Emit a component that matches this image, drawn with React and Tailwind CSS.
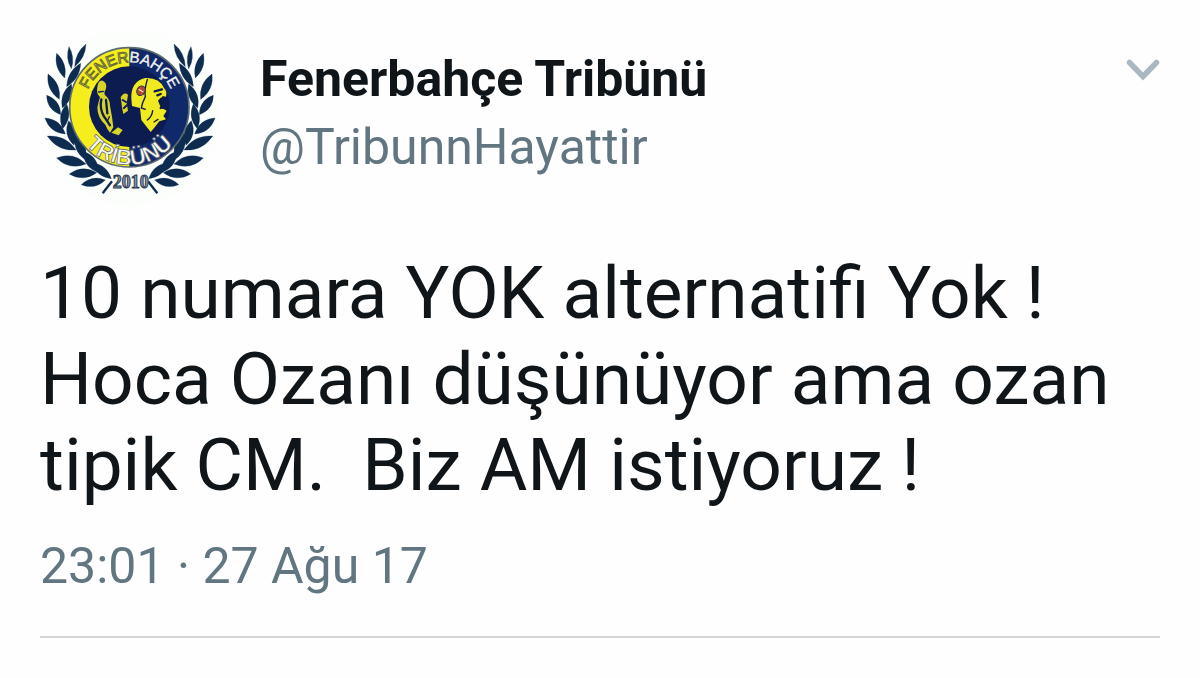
// base x, base y, tip x, tip y, width
const LEAVES = [
  [124, 146, 117, 80, 15],
  [134, 140, 168, 72, 17],
  [104, 174, 80, 100, 22],
  [110, 200, 152, 130, 22],
  [88, 238, 54, 162, 25],
  [97, 264, 124, 192, 24],
  [92, 284, 50, 226, 25],
  [98, 326, 110, 252, 24],
  [106, 342, 45, 294, 26],
  [132, 376, 116, 302, 26],
  [138, 390, 52, 348, 28],
  [164, 418, 138, 338, 29],
  [168, 432, 80, 414, 30],
  [206, 458, 160, 394, 28],
  [200, 458, 118, 462, 27],
  [244, 476, 186, 428, 24],
  [226, 480, 154, 494, 24],
]

function leafPath([x1, y1, x2, y2, w]) {
  const dx = x2 - x1
  const dy = y2 - y1
  const len = Math.hypot(dx, dy)
  const nx = (-dy / len) * w
  const ny = (dx / len) * w
  const mx = (x1 + x2) / 2
  const my = (y1 + y2) / 2
  return `M${x1} ${y1}Q${mx + nx} ${my + ny} ${x2} ${y2}Q${mx - nx} ${my - ny} ${x1} ${y1}Z`
}

function Branch() {
  return (
    <g fill="#0d2c50" stroke="#0d2c50" strokeWidth="1" strokeLinejoin="round">
      {LEAVES.map((leaf) => (
        <path key={leaf.join('-')} d={leafPath(leaf)} />
      ))}
      <path d="M218 520L246 484" fill="none" strokeWidth="7" />
    </g>
  )
}

function Emblem() {
  return (
    <svg viewBox="30 30 540 540" className="size-[180px] shrink-0" role="img" aria-label="Fenerbahçe Tribünü">
      <circle cx="300" cy="290" r="268" fill="#fcfefc" />
      <Branch />
      <g transform="translate(600 0) scale(-1 1)">
        <Branch />
      </g>

      {/* disc */}
      <circle cx="298" cy="262" r="179" fill="#f5ed1c" />
      <path d="M298 83A179 179 0 0 1 298 441Z" fill="#10296a" />
      <circle cx="298" cy="262" r="179" fill="none" stroke="#5b6b6e" strokeWidth="5" />
      <circle cx="298" cy="260" r="121" fill="#0c1b50" />

      {/* faces */}
      <g fill="#d8d327">
        <path d="M202 202Q204 180 218 182Q232 188 228 206Q222 214 224 224Q240 236 240 258L246 290L250 322L240 338Q232 330 226 314Q202 294 202 262Q206 244 210 232Q198 220 202 202Z" />
        <path d="M272 232Q282 214 294 224L290 250L294 272L280 282L276 262Z" />
        <path d="M244 338L264 322L278 330L266 346Z" />
      </g>
      <path
        d="M304 236Q302 184 346 174Q388 172 402 204Q412 214 408 230L398 228L388 246L396 264L410 272L400 288L408 298L388 304L374 322L362 336L334 300L330 264L306 258Z"
        fill="#f2ea20"
      />
      <g fill="none" stroke="#0c1b50" strokeLinecap="round">
        <path d="M214 238Q208 266 222 290M228 240L232 280M224 292L240 316" strokeWidth="7" />
        <path d="M206 216L220 214M238 290L232 304" strokeWidth="4" />
        <path d="M278 240L288 246M282 264L290 256" strokeWidth="6" />
        <path d="M352 178Q342 212 346 230Q336 250 334 264L346 268" strokeWidth="4" />
        <path d="M374 214L396 208M382 226L392 222M390 244L402 236M392 264L404 252" strokeWidth="7" />
        <path d="M352 300Q366 290 368 272M372 306L384 298" strokeWidth="4" />
      </g>
      <path d="M384 242Q396 224 408 236L410 268L394 266Z" fill="#0c1b50" />
      <ellipse cx="333" cy="212" rx="12" ry="15" fill="#b4492f" stroke="#27304f" strokeWidth="3" transform="rotate(30 333 212)" />
      <path d="M326 208L340 216" stroke="#e9e2c8" strokeWidth="4" />

      {/* lettering */}
      <path id="emblem-top" d="M163 262A135 135 0 0 1 433 262" fill="none" />
      <path id="emblem-bottom" d="M125 262A173 173 0 0 0 471 262" fill="none" />
      <g fontFamily="Liberation Sans, Arial, sans-serif" textAnchor="middle">
        <text fontSize="46" fill="#f4f4ee" stroke="#f4f4ee" strokeWidth="1">
          <textPath href="#emblem-top" startOffset="50%">
            <tspan fill="#e2e0a0" stroke="#6a6d2c" strokeWidth="3">FENER</tspan>BAHÇE
          </textPath>
        </text>
        <text fontSize="66" fontWeight="700" fill="#fbfbf5" stroke="#56606a" strokeWidth="2">
          <textPath href="#emblem-bottom" startOffset="50%">TRİBÜNÜ</textPath>
        </text>
      </g>
      <text
        x="302"
        y="505"
        fontSize="54"
        fontWeight="700"
        fontFamily="Liberation Serif, Times New Roman, serif"
        textAnchor="middle"
        fill="#8d99a6"
        stroke="#2b3c50"
        strokeWidth="3"
      >
        2010
      </text>
    </svg>
  )
}

function TweetHeader({ name, handle }) {
  return (
    <header className="flex items-start">
      <Emblem />
      <div className="ml-10 min-w-0 flex-1 pt-4 text-[50px]">
        <h1 className="leading-[66px] font-bold text-[#0f1519]">{name}</h1>
        <a href="#profile" className="block leading-[70px] text-[#627681]">
          {handle}
        </a>
      </div>
      <button type="button" aria-label="Menü" className="mt-7 -mr-px">
        <svg viewBox="0 0 36 24" className="h-6 w-9" fill="none" stroke="#aab8c2" strokeWidth="5.5" strokeLinecap="round">
          <path d="M4.500 4.500L18 18.500L31.500 4.500" />
        </svg>
      </button>
    </header>
  )
}

export default function App() {
  return (
    <main className="min-h-screen bg-[#fefefe] px-10 pt-[30px] font-['Roboto',sans-serif]">
      <article>
        <TweetHeader name="Fenerbahçe Tribünü" handle="@TribunnHayattir" />
        <p className="mt-10 text-[73px] leading-[86px] whitespace-pre-line text-[#0f1519]">
          10 numara YOK alternatifi Yok !{'\n'}
          Hoca Ozanı düşünüyor ama ozan{'\n'}
          tipik CM.&nbsp; Biz AM istiyoruz !
        </p>
        <time dateTime="2017-08-27T23:01" className="mt-7 block text-[50px] leading-[60px] text-[#627681]">
          23:01 · 27 Ağu 17
        </time>
        <hr className="mt-10 border-t-2 border-[#d2d4d5]" />
      </article>
    </main>
  )
}
